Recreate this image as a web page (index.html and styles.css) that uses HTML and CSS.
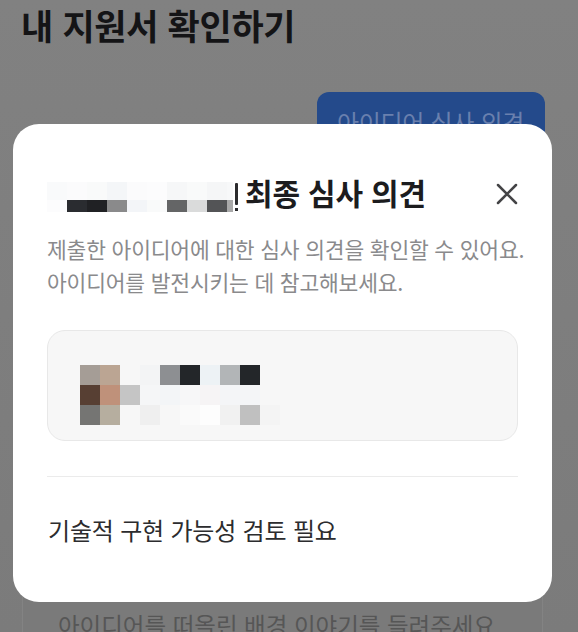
FILE: index.html
```html
<!DOCTYPE html>
<html lang="ko">
<head>
<meta charset="utf-8">
<title>내 지원서 확인하기</title>
<link rel="stylesheet" href="styles.css">
</head>
<body>
<div class="page">
  <h1 class="title">내 지원서 확인하기</h1>
  <div class="actions">
    <div class="review-btn">아이디어 심사 의견</div>
  </div>
  <div class="bg-card">
    <p class="bg-placeholder">아이디어를 떠올린 배경 이야기를 들려주세요</p>
  </div>

  <div class="modal" role="dialog">
    <div class="modal-head">
      <div class="name-mosaic">
        <div class="mrow top">
          <span class="px c-f9"></span><span class="px c-fb"></span><span class="px c-fa"></span><span class="px c-f6"></span><span class="px c-fb"></span><span class="px c-fc"></span><span class="px c-f7"></span><span class="px c-fa"></span><span class="px c-f5"></span><span class="px narrow c-f8"></span>
        </div>
        <div class="mrow bottom">
          <span class="px c-fc"></span><span class="px c-2a"></span><span class="px c-20"></span><span class="px c-88"></span><span class="px c-f4"></span><span class="px c-fa"></span><span class="px c-66"></span><span class="px c-dc"></span><span class="px c-55"></span><span class="px narrow c-aa"></span>
        </div>
        <div class="bang"><span class="bang-bar"></span><span class="bang-dot"></span></div>
      </div>
      <h2 class="modal-title">최종 심사 의견</h2>
      <button class="close" aria-label="닫기">
        <svg viewBox="0 0 24 24" width="24" height="24"><path d="M3 3 L21 21 M21 3 L3 21" stroke="#444446" stroke-width="2.5" stroke-linecap="round" fill="none"/></svg>
      </button>
    </div>
    <p class="modal-desc">제출한 아이디어에 대한 심사 의견을 확인할 수 있어요.<br>아이디어를 발전시키는 데 참고해보세요.</p>
    <div class="reviewer-card">
      <div class="mosaic-grid">
        <span class="px" style="background:#a59d96"></span><span class="px" style="background:#bba593"></span><span class="px" style="background:#f7f7f7"></span><span class="px" style="background:#f3f4f5"></span><span class="px" style="background:#8d8f92"></span><span class="px" style="background:#232629"></span><span class="px" style="background:#edf2f5"></span><span class="px" style="background:#b2b5b7"></span><span class="px" style="background:#232629"></span><span class="px" style="background:#f7f7f7"></span>
        <span class="px" style="background:#573f33"></span><span class="px" style="background:#bf917a"></span><span class="px" style="background:#c5c5c5"></span><span class="px" style="background:#f5f6f7"></span><span class="px" style="background:#f3f5f7"></span><span class="px" style="background:#f7f7f8"></span><span class="px" style="background:#f6f4f5"></span><span class="px" style="background:#f4f5f7"></span><span class="px" style="background:#f4f5f7"></span><span class="px" style="background:#f7f7f7"></span>
        <span class="px" style="background:#757573"></span><span class="px" style="background:#b6ae9f"></span><span class="px" style="background:#f7f7f7"></span><span class="px" style="background:#efefef"></span><span class="px" style="background:#f7f7f7"></span><span class="px" style="background:#fafafa"></span><span class="px" style="background:#fdfdfd"></span><span class="px" style="background:#f1f1f1"></span><span class="px" style="background:#c0c0c0"></span><span class="px" style="background:#f4f4f4"></span>
      </div>
    </div>
    <hr class="divider">
    <p class="review-text">기술적 구현 가능성 검토 필요</p>
  </div>
</div>
</body>
</html>
```

FILE: styles.css
```css
* { box-sizing: border-box; }

html, body {
  margin: 0;
  padding: 0;
}

body {
  background: #7d7d7d;
  font-family: "Noto Sans CJK KR", "Noto Sans", sans-serif;
}

.page {
  position: relative;
  width: 578px;
  height: 632px;
  overflow: hidden;
  background: linear-gradient(#818181, #7b7b7b);
}

.title {
  margin: 0;
  padding: 0 0 0 21px;
  font-size: 35px;
  line-height: 50px;
  font-weight: 700;
  color: #141416;
  letter-spacing: -0.3px;
}

.actions {
  display: flex;
  justify-content: flex-end;
  padding-right: 33px;
  margin-top: 42px;
}

.review-btn {
  width: 228px;
  height: 60px;
  line-height: 60px;
  padding-left: 20px;
  border-radius: 12px;
  background: #244a8b;
  color: #6a80ae;
  font-size: 24px;
  letter-spacing: -0.3px;
  white-space: nowrap;
}

.bg-card {
  margin: 400px 35px 0 22px;
  padding: 56px 0 0 35px;
  height: 200px;
  border: 1px solid #838383;
  border-radius: 16px;
  background: #7a7a7a;
}

.bg-placeholder {
  margin: 0;
  font-size: 23.5px;
  line-height: 32px;
  color: #565656;
  white-space: nowrap;
}

.modal {
  position: absolute;
  left: 13px;
  top: 124px;
  width: 539px;
  height: 478px;
  padding: 48px 34px 0 34px;
  background: #ffffff;
  border-radius: 26px;
}

.modal-head {
  display: flex;
  align-items: center;
  height: 40px;
}

.name-mosaic {
  position: relative;
  align-self: flex-end;
  width: 191px;
  height: 30px;
  margin-right: 7px;
}

.mrow {
  display: flex;
}

.mrow.top .px { height: 18px; }
.mrow.bottom .px { height: 12px; }

.name-mosaic .px {
  display: block;
  width: 20px;
}

.name-mosaic .px.narrow { width: 6px; }

.c-f9 { background: #f9fafb; }
.c-fb { background: #fbfbfc; }
.c-fa { background: #f9fafa; }
.c-f6 { background: #f4f6f8; }
.c-fc { background: #fcfcfd; }
.c-f7 { background: #f6f7f8; }
.c-f5 { background: #f5f6f7; }
.c-f8 { background: #f7f8f9; }
.c-f4 { background: #f3f5f8; }
.c-2a { background: #2a2c30; }
.c-20 { background: #202124; }
.c-88 { background: #8a8a8b; }
.c-66 { background: #646566; }
.c-dc { background: #dadbdb; }
.c-55 { background: #535456; }
.c-aa { background: #a9a9a9; }

.bang {
  position: absolute;
  right: 0;
  top: 1px;
  width: 3px;
  height: 29px;
  display: flex;
  flex-direction: column;
  gap: 3px;
}

.bang-bar {
  display: block;
  width: 3px;
  height: 22px;
  background: #2b2b2d;
  border-radius: 1px;
}

.bang-dot {
  display: block;
  width: 3px;
  height: 3px;
  background: #2b2b2d;
}

.modal-title {
  margin: 0;
  font-size: 30px;
  line-height: 40px;
  font-weight: 600;
  color: #1c1c1e;
  letter-spacing: -0.2px;
  white-space: nowrap;
}

.close {
  margin-left: auto;
  margin-top: 4px;
  margin-right: -1px;
  width: 24px;
  height: 24px;
  padding: 0;
  border: 0;
  background: transparent;
  display: flex;
}

.modal-desc {
  margin: 20px 0 0 0;
  font-size: 21.5px;
  line-height: 33px;
  color: #8a8a8c;
  letter-spacing: -0.2px;
  white-space: nowrap;
}

.reviewer-card {
  margin-top: 32px;
  height: 111px;
  padding: 34px 0 15px 32px;
  background: #f7f7f7;
  border: 1px solid #e8e8e8;
  border-radius: 18px;
}

.mosaic-grid {
  display: grid;
  grid-template-columns: repeat(10, 20px);
  grid-auto-rows: 20px;
}

.mosaic-grid .px { display: block; }

.divider {
  margin: 35px 0 0 0;
  border: 0;
  height: 1px;
  background: #ebebeb;
}

.review-text {
  margin: 38px 0 0 1px;
  font-size: 24px;
  line-height: 30px;
  color: #2c2c2e;
  letter-spacing: -0.2px;
  white-space: nowrap;
}
```
